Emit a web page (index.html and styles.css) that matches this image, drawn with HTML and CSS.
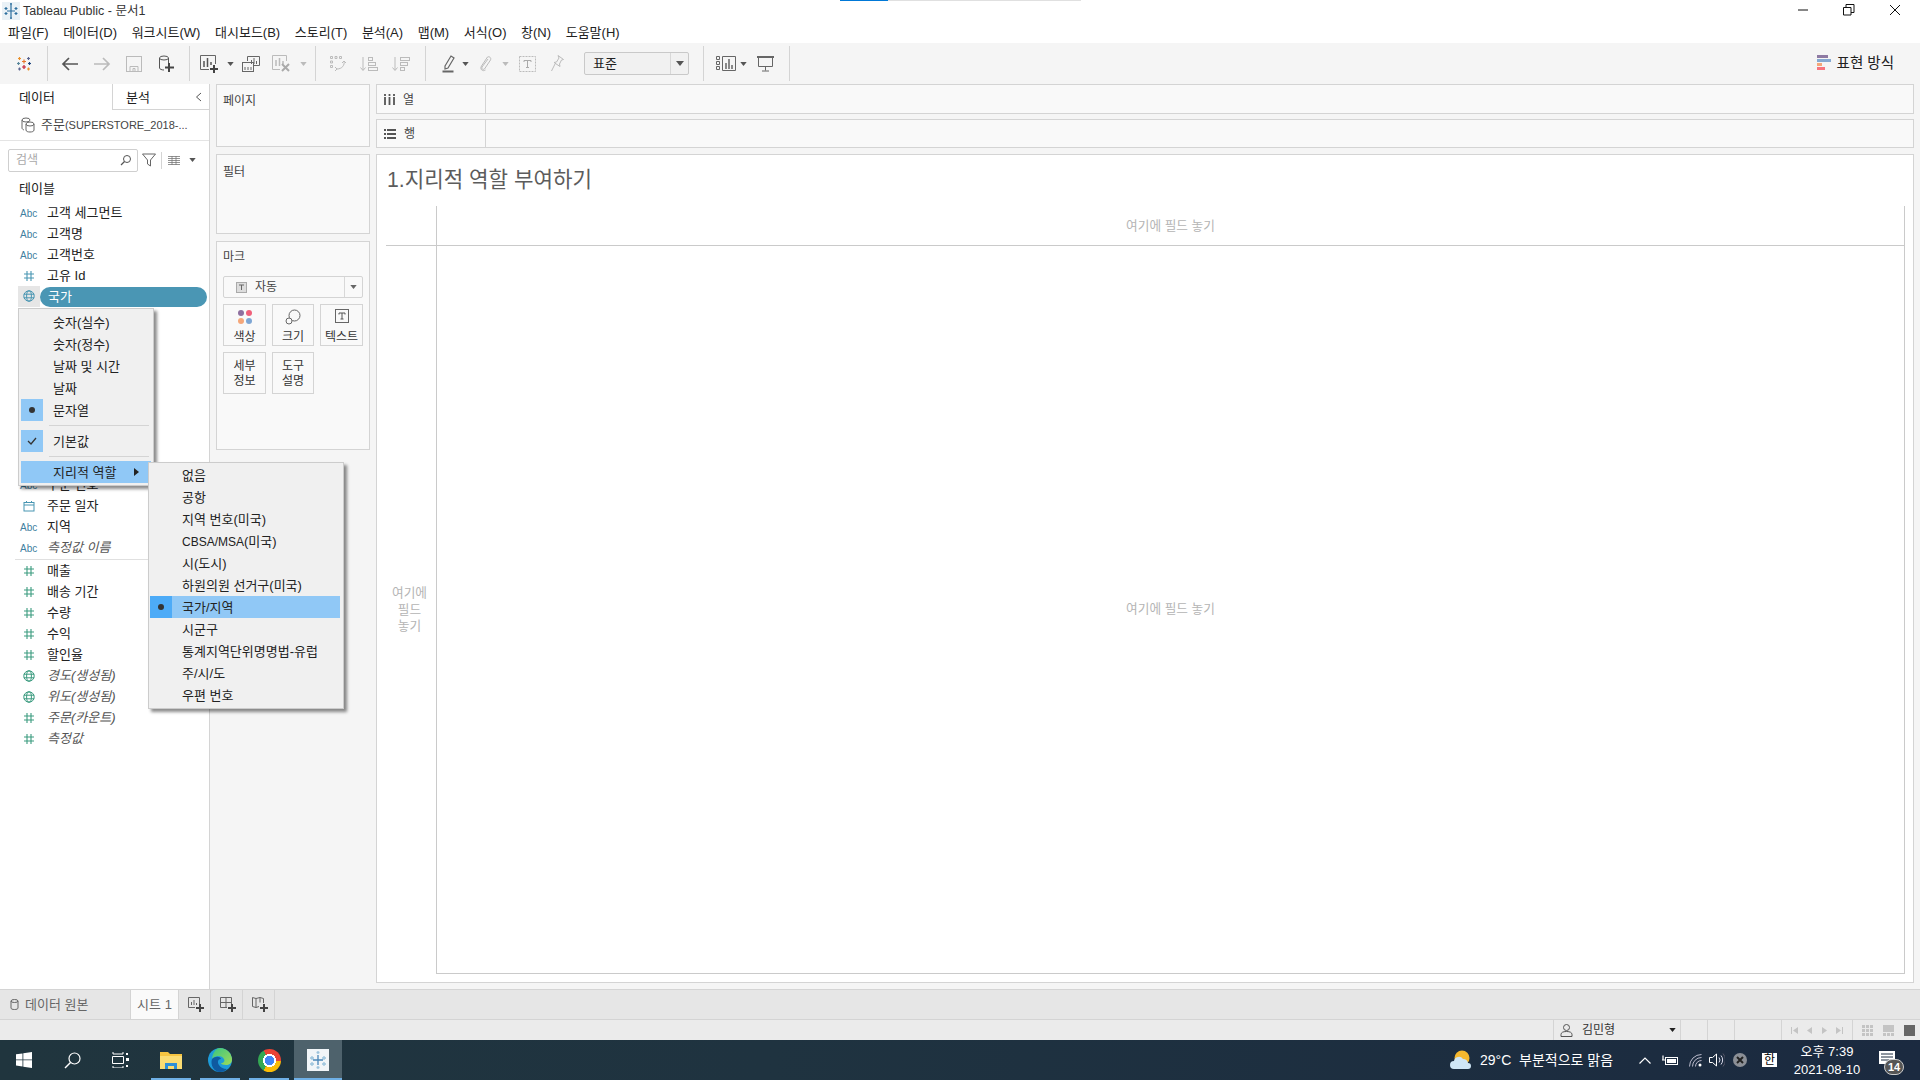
FILE: index.html
```html
<!DOCTYPE html>
<html lang="ko">
<head>
<meta charset="utf-8">
<title>Tableau Public - 문서1</title>
<link rel="stylesheet" href="styles.css">
</head>
<body>
<svg class="defs" width="0" height="0" aria-hidden="true">
  <symbol id="hash" viewBox="0 0 12 12"><path d="M4 1v10M8 1v10M1 4h10M1 8h10" fill="none" stroke="currentColor" stroke-width="1.1"/></symbol>
  <symbol id="globe" viewBox="0 0 12 12"><g fill="none" stroke="currentColor" stroke-width="1"><circle cx="6" cy="6" r="5.2"/><ellipse cx="6" cy="6" rx="2.4" ry="5.2"/><path d="M.8 4.2h10.4M.8 7.8h10.4"/></g></symbol>
  <symbol id="calendar" viewBox="0 0 12 12"><g fill="none" stroke="currentColor" stroke-width="1"><rect x="1" y="2.5" width="10" height="8.5"/><path d="M1 5h10M3.5 1v2M8.5 1v2"/></g></symbol>
  <symbol id="caret" viewBox="0 0 8 5"><path d="M0 0h8L4 5z" fill="currentColor"/></symbol>
  <symbol id="tlogo" viewBox="0 0 18 18"><g fill="none" stroke-width="1.2"><path d="M9 4.500v4M7 6.500h4" stroke="#e8762c"/><path d="M9 10v4M7 12h4" stroke="#c72035"/><path d="M3.500 7v3M2 8.500h3" stroke="#59879b"/><path d="M14.500 7v3M13 8.500h3" stroke="#1f457e"/><path d="M4.500 2v3M3 3.500h3" stroke="#eb912b"/><path d="M13.500 2v3M12 3.500h3" stroke="#5b6591"/><path d="M4.500 12.500v3M3 14h3" stroke="#5c6692"/><path d="M13.500 12.500v3M12 14h3" stroke="#eb912b"/></g></symbol>
</svg>

<div class="progress"><span class="progress-on"></span></div>

<header class="titlebar">
  <svg class="title-logo" width="18" height="18" viewBox="0 0 18 18"><rect width="18" height="18" fill="#e9f1f6"/><g fill="none" stroke="#2c6f9e" stroke-width="1.2"><path d="M9 3v12M5 9h8M4 5v3M2.500 6.500h3M14 5v3M12.500 6.500h3M4 10v3M2.500 11.500h3M14 10v3M12.500 11.500h3M9 1v2M8 2h2M9 15v2M8 16h2"/></g></svg>
  <span class="title-text">Tableau Public - 문서1</span>
  <div class="win-controls">
    <svg width="12" height="12" viewBox="0 0 12 12"><path d="M1 6h10" stroke="#111"/></svg>
    <svg width="12" height="12" viewBox="0 0 12 12"><path d="M.5 3.500h7.500v7.500h-7.500zM3 3.500v-3h8v8h-3" fill="none" stroke="#111"/></svg>
    <svg width="12" height="12" viewBox="0 0 12 12"><path d="M1 1l10 10M11 1L1 11" stroke="#111"/></svg>
  </div>
</header>

<nav class="menubar">
  <span>파일(F)</span><span>데이터(D)</span><span>워크시트(W)</span><span>대시보드(B)</span><span>스토리(T)</span><span>분석(A)</span><span>맵(M)</span><span>서식(O)</span><span>창(N)</span><span>도움말(H)</span>
</nav>

<div class="toolbar">
  <div class="t w47"><svg width="18" height="18"><use href="#tlogo"/></svg></div>
  <i class="sep"></i><i class="sp6"></i>
  <div class="t w32"><svg width="18" height="14" viewBox="0 0 18 14"><path d="M17 7H2M8 1L2 7l6 6" fill="none" stroke="#555" stroke-width="1.700"/></svg></div>
  <div class="t w32"><svg width="18" height="14" viewBox="0 0 18 14"><path d="M1 7h15M10 1l6 6-6 6" fill="none" stroke="#bbb" stroke-width="1.700"/></svg></div>
  <div class="t w32"><svg width="16" height="16" viewBox="0 0 16 16"><g fill="none" stroke="#bbb"><rect x=".5" y=".5" width="15" height="15"/><path d="M4 15.500v-5h8v5M7 15.500v-3h2v3"/></g></svg></div>
  <div class="t w32"><svg width="16" height="18" viewBox="0 0 16 18"><g fill="none" stroke="#555"><ellipse cx="6" cy="3" rx="4.500" ry="2"/><path d="M1.500 3v10c0 1 2 2 4.500 2M10.500 3v5"/></g><path d="M11 8v9M7 12.500h9" stroke="#444" stroke-width="2"/></svg></div>
  <i class="sp7"></i><i class="sep"></i><i class="sp6"></i>
  <div class="t w26"><svg width="18" height="18" viewBox="0 0 18 18"><g fill="none" stroke="#666"><path d="M15.500 9V.5H.5v14H9"/></g><path d="M4 6v6M7.500 3v9M11 7v3" stroke="#555" stroke-width="1.500"/><path d="M14 10v8M10 14h8" stroke="#444" stroke-width="2"/></svg></div>
  <div class="t w16 dark"><svg width="7" height="4"><use href="#caret"/></svg></div>
  <div class="t w26"><svg width="18" height="16" viewBox="0 0 18 16"><g fill="none" stroke="#666"><path d="M5.500 5V.5h12v9H12"/><rect x=".5" y="6.500" width="11" height="9" fill="#f5f5f5"/></g><path d="M9.500 4v4M12 2v6M14.500 5v3M3 11v3M6 11v3M9 11v3" stroke="#666"/></svg></div>
  <div class="t w34"><svg width="18" height="17" viewBox="0 0 18 17"><path d="M14.500 6V.5H.5v14H8" fill="none" stroke="#bbb"/><path d="M4 5v6M7.500 3v8M11 6v3" stroke="#bbb" stroke-width="1.500"/><path d="M10 9l7 7M17 9l-7 7" stroke="#aaa" stroke-width="2"/></svg></div>
  <div class="t w10 light"><svg width="7" height="4"><use href="#caret"/></svg></div>
  <i class="sp7"></i><i class="sep"></i><i class="sp6"></i>
  <div class="t w30"><svg width="17" height="17" viewBox="0 0 17 17"><g fill="none" stroke="#bbb"><path d="M1.500 1.500h2v2h-2zM6 1.500h2v2H6zM10.500 1.500h2v2h-2zM1.500 6h2v2h-2zM1.500 10.500h2v2h-2z"/><path d="M15 6c1 4-2 8-7 8M6 12l2 2-2 2M13 8l2-2 2 2"/></g></svg></div>
  <div class="t w34"><svg width="18" height="16" viewBox="0 0 18 16"><g fill="none" stroke="#bbb"><path d="M3 1v13M.5 11.500L3 14.500l2.500-3"/><rect x="8.500" y="1.500" width="4" height="3"/><rect x="8.500" y="6.500" width="7" height="3"/><rect x="8.500" y="11.500" width="9" height="3"/></g></svg></div>
  <div class="t w30"><svg width="18" height="16" viewBox="0 0 18 16"><g fill="none" stroke="#bbb"><path d="M3 1v13M.5 11.500L3 14.500l2.500-3"/><rect x="8.500" y="1.500" width="9" height="3"/><rect x="8.500" y="6.500" width="7" height="3"/><rect x="8.500" y="11.500" width="4" height="3"/></g></svg></div>
  <i class="sp9"></i><i class="sep"></i><i class="sp9"></i>
  <div class="t w26"><svg width="13" height="18" viewBox="0 0 13 18"><path d="M3 11l6-10 3 2-6 10-3 1z" fill="none" stroke="#666" stroke-width="1.200"/><path d="M.5 16.500h11" stroke="#666" stroke-width="2"/></svg></div>
  <div class="t w8 dark"><svg width="7" height="4"><use href="#caret"/></svg></div>
  <div class="t w32"><svg width="13" height="17" viewBox="0 0 13 17"><path d="M9 4l-6 8c-1 2 1 3 2.500 2l6-9c1-2-1-4-3-3l-6 9c-2 3 1 6 4 4" fill="none" stroke="#bbb"/></svg></div>
  <div class="t w8 light"><svg width="7" height="4"><use href="#caret"/></svg></div>
  <div class="t w36"><svg width="17" height="16" viewBox="0 0 17 16"><rect x=".5" y=".5" width="16" height="15" fill="none" stroke="#bbb" stroke-dasharray="2 1"/><path d="M5 4.500h7M8.500 4.500v7M7 11.500h3M5 4.500v1.500M12 4.500v1.500" fill="none" stroke="#aaa"/></svg></div>
  <div class="t w24"><svg width="13" height="17" viewBox="0 0 13 17"><path d="M7 .5l5.500 4-2 .5-2 4 .5 2.500-6-4 2.500-.5 2.500-4zM4 9l-3.500 7" fill="none" stroke="#bbb"/></svg></div>
  <i class="sp15"></i>
  <div class="toolbar-select"><span class="toolbar-select-text">표준</span><span class="toolbar-select-btn"><svg width="8" height="5"><use href="#caret"/></svg></span></div>
  <i class="sp14"></i><i class="sep"></i><i class="sp9"></i>
  <div class="t w26"><svg width="20" height="15" viewBox="0 0 20 15"><g fill="none" stroke="#666"><path d="M.5.500h3v3h-3zM.5 5.500h3v3h-3zM.5 10.500h3v3h-3zM6.500.500h13v14h-13z"/></g><path d="M10 7v6M13 3v10M16 9v4" stroke="#666" stroke-width="1.500"/></svg></div>
  <div class="t w8 dark"><svg width="7" height="4"><use href="#caret"/></svg></div>
  <div class="t w36"><svg width="17" height="16" viewBox="0 0 17 16"><path d="M0 1h17" stroke="#666" stroke-width="2"/><path d="M1.500 1v9.500h14V1M8.500 10.500v4M5 15h7" fill="none" stroke="#666"/></svg></div>
  <i class="sp6"></i><i class="sep"></i>
  <div class="show-me">
    <svg width="14" height="16" viewBox="0 0 14 16"><rect width="11" height="3" fill="#8e7aa3"/><rect y="4" width="14" height="3" fill="#86a9d1"/><rect y="8" width="5" height="3" fill="#f5a77a"/><rect y="12" width="8" height="3" fill="#f7757f"/></svg>
    <span>표현 방식</span>
  </div>
</div>

<main class="workspace">
  <aside class="data-pane">
    <div class="pane-tabs">
      <div class="pane-tab pane-tab-on">데이터</div>
      <div class="pane-tab pane-tab-off">분석
        <svg class="collapse" width="7" height="10" viewBox="0 0 7 10"><path d="M6 1L1.500 5 6 9" fill="none" stroke="#555"/></svg>
      </div>
    </div>
    <div class="source">
      <svg width="14" height="16" viewBox="0 0 14 16"><g fill="none" stroke="#666"><ellipse cx="5" cy="3" rx="4" ry="2"/><path d="M1 3v8c0 1 1 1.500 2 2"/><ellipse cx="9" cy="7" rx="4" ry="2" fill="#fff"/><path d="M5 7v6c0 1.500 2 2 4 2s4-.5 4-2V7"/></g></svg>
      <span>주문<span class="src-latin">(SUPERSTORE_2018-...</span></span>
    </div>
    <div class="search-row">
      <div class="search-box"><span>검색</span><svg width="12" height="12" viewBox="0 0 12 12"><circle cx="7" cy="5" r="3.500" fill="none" stroke="#555"/><path d="M4.500 7.500L1 11" stroke="#555" stroke-width="1.300"/></svg></div>
      <svg class="funnel" width="14" height="14" viewBox="0 0 14 14"><path d="M.5 1h13L8.500 7v6l-3-2V7z" fill="none" stroke="#666"/></svg>
      <i class="search-sep"></i>
      <svg class="list-icon" width="12" height="9" viewBox="0 0 12 9"><path d="M0 .5h12M0 2.500h12M0 4.500h12M0 6.500h12M0 8.500h12M4 0v9M8 0v9" stroke="#777" stroke-width=".8"/></svg>
      <svg class="list-caret" width="7" height="4"><use href="#caret"/></svg>
    </div>
    <div class="tables-head">테이블</div>
    <ul class="fields">
      <li class="field"><b class="abc">Abc</b><span>고객 세그먼트</span></li>
      <li class="field"><b class="abc">Abc</b><span>고객명</span></li>
      <li class="field"><b class="abc">Abc</b><span>고객번호</span></li>
      <li class="field"><svg class="fi dim" width="12" height="12"><use href="#hash"/></svg><span>고유 Id</span></li>
      <li class="field field-sel"><span class="fi-cell"><svg class="fi dim" width="12" height="12"><use href="#globe"/></svg></span><span class="pill">국가</span></li>
      <li class="fields-covered"></li>
      <li class="field"><b class="abc">Abc</b><span>주문 번호</span></li>
      <li class="field"><svg class="fi dim" width="12" height="12"><use href="#calendar"/></svg><span>주문 일자</span></li>
      <li class="field"><b class="abc">Abc</b><span>지역</span></li>
      <li class="field field-gen"><b class="abc">Abc</b><span>측정값 이름</span></li>
      <li class="fields-sep"></li>
      <li class="field"><svg class="fi mea" width="12" height="12"><use href="#hash"/></svg><span>매출</span></li>
      <li class="field"><svg class="fi mea" width="12" height="12"><use href="#hash"/></svg><span>배송 기간</span></li>
      <li class="field"><svg class="fi mea" width="12" height="12"><use href="#hash"/></svg><span>수량</span></li>
      <li class="field"><svg class="fi mea" width="12" height="12"><use href="#hash"/></svg><span>수익</span></li>
      <li class="field"><svg class="fi mea" width="12" height="12"><use href="#hash"/></svg><span>할인율</span></li>
      <li class="field field-gen"><svg class="fi mea" width="12" height="12"><use href="#globe"/></svg><span>경도(생성됨)</span></li>
      <li class="field field-gen"><svg class="fi mea" width="12" height="12"><use href="#globe"/></svg><span>위도(생성됨)</span></li>
      <li class="field field-gen"><svg class="fi mea" width="12" height="12"><use href="#hash"/></svg><span>주문(카운트)</span></li>
      <li class="field field-gen"><svg class="fi mea" width="12" height="12"><use href="#hash"/></svg><span>측정값</span></li>
    </ul>
  </aside>

  <section class="cards">
    <div class="card card-pages"><div class="card-title">페이지</div></div>
    <div class="card card-filters"><div class="card-title">필터</div></div>
    <div class="card card-marks">
      <div class="card-title">마크</div>
      <div class="mark-select">
        <svg class="mark-select-icon" width="11" height="11" viewBox="0 0 11 11"><rect x=".5" y=".5" width="10" height="10" fill="#ddd" stroke="#aaa"/><path d="M3 3h5M5.500 3v5" stroke="#666"/></svg>
        <span class="mark-select-text">자동</span>
        <span class="mark-select-btn"><svg width="7" height="4"><use href="#caret"/></svg></span>
      </div>
      <div class="mark-grid">
        <div class="mark-btn"><svg width="16" height="16" viewBox="0 0 16 16"><circle cx="4" cy="4" r="3" fill="#8e6f9f"/><circle cx="12" cy="4" r="3" fill="#f0607a"/><circle cx="4" cy="12" r="3" fill="#f5a77a"/><circle cx="12" cy="12" r="3" fill="#7ea6d4"/></svg><span>색상</span></div>
        <div class="mark-btn"><svg width="16" height="16" viewBox="0 0 16 16"><circle cx="9.500" cy="6.500" r="5.500" fill="none" stroke="#666"/><circle cx="4" cy="12" r="3" fill="#fafafa" stroke="#666"/></svg><span>크기</span></div>
        <div class="mark-btn"><svg width="14" height="14" viewBox="0 0 14 14"><rect x=".5" y=".5" width="13" height="13" fill="none" stroke="#666"/><path d="M4 4h6M7 4v6M5.500 10h3M4 4v1.500M10 4v1.500" fill="none" stroke="#555"/></svg><span>텍스트</span></div>
        <div class="mark-btn mark-btn-2"><span>세부<br>정보</span></div>
        <div class="mark-btn mark-btn-2"><span>도구<br>설명</span></div>
      </div>
    </div>
  </section>

  <section class="stage">
    <div class="shelf"><div class="shelf-label"><svg width="11" height="11" viewBox="0 0 11 11"><path d="M1 3v8M5.500 3v8M10 3v8M1 0v2M5.500 0v2M10 0v2" stroke="#555" stroke-width="1.800"/></svg><span>열</span></div></div>
    <div class="shelf shelf-rows"><div class="shelf-label"><svg width="12" height="10" viewBox="0 0 12 10"><path d="M3 1h9M3 5h9M3 9h9M0 1h2M0 5h2M0 9h2" stroke="#555" stroke-width="1.800"/></svg><span>행</span></div></div>
    <div class="sheet">
      <h1 class="sheet-title">1.지리적 역할 부여하기</h1>
      <div class="viz">
        <div class="viz-corner"></div>
        <div class="viz-top">여기에 필드 놓기</div>
        <div class="viz-left">여기에<br>필드<br>놓기</div>
        <div class="viz-main">여기에 필드 놓기</div>
      </div>
    </div>
  </section>
</main>

<div class="tabbar">
  <div class="tab-source"><svg width="9" height="11" viewBox="0 0 9 11"><g fill="none" stroke="#666"><ellipse cx="4.500" cy="2" rx="3.500" ry="1.500"/><path d="M1 2v7c0 1 1.500 1.500 3.500 1.500S8 10 8 9V2"/></g></svg><span>데이터 원본</span></div>
  <div class="tab-sheet">시트 1</div>
  <div class="tab-add"><svg width="16" height="15" viewBox="0 0 16 15"><path d="M11.500 7V.5h-11v10H7" fill="none" stroke="#666"/><path d="M3.500 5v3M6 3v5M8.500 6v2" stroke="#666"/><path d="M12 7v8M8 11h8" stroke="#444" stroke-width="2"/></svg></div>
  <div class="tab-add"><svg width="16" height="15" viewBox="0 0 16 15"><path d="M11.500 7V.5h-11v10H7M.5 5.500h11M6 .5v10" fill="none" stroke="#666"/><path d="M12 7v8M8 11h8" stroke="#444" stroke-width="2"/></svg></div>
  <div class="tab-add"><svg width="16" height="15" viewBox="0 0 16 15"><path d="M11.500 6V1.500L8 .5 4 1.500.5.500v9l3.500 1 3-1M4 1.500v9M8 .5v5" fill="none" stroke="#666"/><path d="M12 7v8M8 11h8" stroke="#444" stroke-width="2"/></svg></div>
</div>

<div class="statusbar">
  <div class="status-user">
    <svg width="13" height="13" viewBox="0 0 13 13"><circle cx="6.500" cy="3.500" r="3" fill="none" stroke="#555"/><path d="M1 12.500v-2c0-2 2-3 5.500-3s5.500 1 5.500 3v2z" fill="none" stroke="#555"/></svg>
    <span class="status-name">김민형</span>
    <svg class="status-caret" width="7" height="4"><use href="#caret"/></svg>
  </div>
  <div class="status-cell w27"></div>
  <div class="status-cell w27"></div>
  <div class="status-cell w47b"></div>
  <div class="status-nav">
    <svg width="7" height="7" viewBox="0 0 7 7"><path d="M0 0h1v7H0zM7 0v7L2 3.500z" fill="#c4c4c4"/></svg>
    <svg width="5" height="7" viewBox="0 0 5 7"><path d="M5 0v7L0 3.500z" fill="#c4c4c4"/></svg>
    <svg width="5" height="7" viewBox="0 0 5 7"><path d="M0 0v7l5-3.500z" fill="#c4c4c4"/></svg>
    <svg width="7" height="7" viewBox="0 0 7 7"><path d="M6 0h1v7H6zM0 0v7l5-3.500z" fill="#c4c4c4"/></svg>
  </div>
  <div class="status-views">
    <svg width="11" height="11" viewBox="0 0 11 11"><path fill="#c4c4c4" d="M0 0h3v3H0zM4 0h3v3H4zM8 0h3v3H8zM0 4h3v3H0zM4 4h3v3H4zM8 4h3v3H8zM0 8h3v3H0zM4 8h3v3H4zM8 8h3v3H8z"/></svg>
    <svg width="11" height="11" viewBox="0 0 11 11"><path fill="#c4c4c4" d="M0 0h11v7H0zM0 8h3v3H0zM4 8h3v3H4zM8 8h3v3H8z"/></svg>
    <svg width="11" height="11" viewBox="0 0 11 11"><rect width="11" height="11" fill="#666"/></svg>
  </div>
</div>

<footer class="taskbar">
  <div class="task t48"><svg width="16" height="16" viewBox="0 0 16 16"><path fill="#fff" d="M0 2.300L6.500 1.400V7.500H0zM7.300 1.300L16 0V7.500H7.300zM0 8.300H6.500V14.500L0 13.600zM7.300 8.300H16V16L7.300 14.700z"/></svg></div>
  <div class="task t48"><svg width="17" height="17" viewBox="0 0 17 17"><circle cx="10.500" cy="6.500" r="5.500" fill="none" stroke="#fff" stroke-width="1.200"/><path d="M6.500 10.500L1 16" stroke="#fff" stroke-width="1.500"/></svg></div>
  <div class="task t48"><svg width="17" height="16" viewBox="0 0 17 16"><path d="M1 0v2h10V0M1 14v2h10v-2M.5 4.500h11v7H.5z" fill="none" stroke="#fff"/><path d="M14 1h2v2h-2zM14 6h3v3h-3zM14 13h2v2h-2z" fill="#fff"/></svg></div>
  <i class="task-sp3"></i>
  <div class="task t40 task-open"><svg width="22" height="18" viewBox="0 0 22 18"><path d="M0 1h8l2 2h12v15H0z" fill="#f6c441"/><path d="M0 5h22v13H0z" fill="#fbdc73"/><path d="M5 12h12v6h-3v-3H8v3H5z" fill="#2e8fd8"/></svg></div>
  <i class="task-sp9"></i>
  <div class="task t40 task-open"><svg width="24" height="24" viewBox="0 0 24 24"><defs><linearGradient id="edgeg" x1="0" y1="0" x2="1" y2="1"><stop offset="0" stop-color="#39c481"/><stop offset="1" stop-color="#9ddb5a"/></linearGradient></defs><circle cx="12" cy="12" r="12" fill="#1d9bd9"/><path d="M12 0a12 12 0 0 1 12 12c0 3-3 5-6 5-3 0-5-1-5-2 3 0 4-2 3-4-2-4-9-4-12 0C5 4 8 0 12 0z" fill="url(#edgeg)"/><path d="M4 11c3-3 8-3 9 0-3 0-4 3-2 6 1 2 4 4 8 4-2 2-4 3-7 3C6 24 2 17 4 11z" fill="#0f5aa0"/></svg></div>
  <i class="task-sp9"></i>
  <div class="task t40 task-open"><span class="chrome"></span></div>
  <i class="task-sp5"></i>
  <div class="task t48 task-active"><svg width="22" height="22" viewBox="0 0 22 22"><rect width="22" height="22" fill="#f1f5f8"/><g fill="none" stroke-width="1.300"><path d="M11 6v10M6 11h10" stroke="#4a86b8"/><path d="M5 7v4M3 9h4M17 7v4M15 9h4M5 13v4M3 15h4M17 13v4M15 15h4M11 2v3M9.500 3.500h3M11 17v3M9.500 18.500h3" stroke="#9cc3dc"/></g></svg></div>
  <div class="tray">
    <svg class="tray-weather" width="22" height="20" viewBox="0 0 22 20"><circle cx="12" cy="8" r="7.500" fill="#f5b82e"/><path d="M4 19a4 4 0 0 1 0-8 5 5 0 0 1 9-2 5 5 0 0 1 5 4 3 3 0 0 1 0 6z" fill="#cfe6f5"/></svg>
    <span class="tray-weather-text">29°C&nbsp; 부분적으로 맑음</span>
    <svg class="tray-i chev" width="12" height="7" viewBox="0 0 12 7"><path d="M.5 6.500L6 1l5.500 5.500" fill="none" stroke="#fff" stroke-width="1.200"/></svg>
    <svg class="tray-i bat" width="16" height="11" viewBox="0 0 16 11"><rect x="3.500" y="2.500" width="12" height="7" fill="none" stroke="#fff"/><rect x="5" y="4" width="9" height="4" fill="#fff"/><path d="M0 5h3M1 .5v4" stroke="#fff" stroke-width="1.200"/></svg>
    <svg class="tray-i wifi" width="13" height="13" viewBox="0 0 13 13"><g fill="none" stroke="#bbc" stroke-width="1"><path d="M.5 12.500a12 12 0 0 1 12-12M3.500 12.500a9 9 0 0 1 9-9M6.500 12.500a6 6 0 0 1 6-6"/></g><circle cx="11" cy="11" r="1.500" fill="#fff"/></svg>
    <svg class="tray-i vol" width="16" height="14" viewBox="0 0 16 14"><path d="M.5 4.500h3L7.500 1v12l-4-3.500h-3z" fill="none" stroke="#fff"/><path d="M10 4.500a4 4 0 0 1 0 5M12 2.500a7 7 0 0 1 0 9" fill="none" stroke="#dde"/><path d="M14 .5a10 10 0 0 1 0 13" fill="none" stroke="#556"/></svg>
    <svg class="tray-i x" width="14" height="14" viewBox="0 0 14 14"><circle cx="7" cy="7" r="7" fill="#8b8f96"/><path d="M4 4l6 6M10 4l-6 6" stroke="#222" stroke-width="2"/></svg>
    <span class="tray-ime">한</span>
    <div class="tray-clock"><span>오후 7:39</span><span>2021-08-10</span></div>
    <div class="tray-note"><svg width="16" height="13" viewBox="0 0 16 13"><path d="M0 0h16v13H0z" fill="#fff"/><path d="M2 3h12M2 6h12M2 9h8" stroke="#1b2a3e"/></svg><b class="tray-badge">14</b></div>
  </div>
</footer>

<div class="ctx-menu">
  <div class="ctx-item"><span class="ctx-mark"></span>숫자(실수)</div>
  <div class="ctx-item"><span class="ctx-mark"></span>숫자(정수)</div>
  <div class="ctx-item"><span class="ctx-mark"></span>날짜 및 시간</div>
  <div class="ctx-item"><span class="ctx-mark"></span>날짜</div>
  <div class="ctx-item"><span class="ctx-mark ctx-mark-on"><i class="dot"></i></span>문자열</div>
  <div class="ctx-sep"></div>
  <div class="ctx-item"><span class="ctx-mark ctx-mark-on"><svg width="10" height="8" viewBox="0 0 10 8"><path d="M1 4l3 3 5-6" fill="none" stroke="#333" stroke-width="1.300"/></svg></span>기본값</div>
  <div class="ctx-sep"></div>
  <div class="ctx-item ctx-item-hi"><span class="ctx-mark"></span>지리적 역할<svg class="ctx-arrow" width="5" height="8" viewBox="0 0 5 8"><path d="M0 0l5 4-5 4z" fill="#222"/></svg></div>
</div>

<div class="ctx-menu ctx-sub">
  <div class="ctx-item"><span class="ctx-mark"></span>없음</div>
  <div class="ctx-item"><span class="ctx-mark"></span>공항</div>
  <div class="ctx-item"><span class="ctx-mark"></span>지역 번호(미국)</div>
  <div class="ctx-item"><span class="ctx-mark"></span><span><span class="ctx-latin">CBSA/MSA</span>(미국)</span></div>
  <div class="ctx-item"><span class="ctx-mark"></span>시(도시)</div>
  <div class="ctx-item"><span class="ctx-mark"></span>하원의원 선거구(미국)</div>
  <div class="ctx-item ctx-item-hi"><span class="ctx-mark ctx-mark-strong"><i class="dot"></i></span>국가/지역</div>
  <div class="ctx-item"><span class="ctx-mark"></span>시군구</div>
  <div class="ctx-item"><span class="ctx-mark"></span>통계지역단위명명법-유럽</div>
  <div class="ctx-item"><span class="ctx-mark"></span>주/시/도</div>
  <div class="ctx-item"><span class="ctx-mark"></span>우편 번호</div>
</div>
</body>
</html>
```

FILE: styles.css
```css
* { box-sizing: border-box; }
html, body { margin: 0; padding: 0; }
body {
  width: 1920px;
  height: 1080px;
  overflow: hidden;
  position: relative;
  display: flex;
  flex-direction: column;
  background: #fff;
  color: #222;
  font-family: "Liberation Sans", "Noto Sans CJK KR", sans-serif;
  font-size: 13px;
  line-height: 1.2;
}
ul { list-style: none; margin: 0; padding: 0; }
i { font-style: normal; }
.defs { position: absolute; }

.progress { position: absolute; left: 840px; top: 0; width: 241px; height: 1px; background: #e0e0e0; }
.progress-on { display: block; width: 48px; height: 1px; background: #0078d7; }

.titlebar { height: 22px; flex: none; display: flex; align-items: center; padding-left: 1px; }
.title-logo { margin-left: 1px; }
.title-text { margin-left: 3px; padding-top: 1px; color: #333; font-size: 12.500px; }
.win-controls { margin-left: auto; display: flex; gap: 34px; padding-right: 19px; margin-top: -2px; }

.menubar { height: 21px; flex: none; display: flex; align-items: center; gap: 14.600px; padding: 1px 0 0 8px; color: #222; }

.toolbar { height: 41px; flex: none; display: flex; align-items: center; background: #f5f5f5; }
.t { height: 40px; display: flex; align-items: center; justify-content: center; flex: none; }
.w8 { width: 8px; } .w10 { width: 10px; } .w16 { width: 16px; } .w24 { width: 24px; } .w26 { width: 26px; }
.w30 { width: 30px; } .w32 { width: 32px; } .w34 { width: 34px; } .w36 { width: 36px; } .w47 { width: 47px; }
.dark { color: #555; } .light { color: #bbb; }
.sep { width: 1px; height: 35px; background: #d4d4d4; flex: none; }
.sp6 { width: 6px; flex: none; } .sp7 { width: 7px; flex: none; } .sp9 { width: 9px; flex: none; }
.sp14 { width: 14px; flex: none; } .sp15 { width: 15px; flex: none; }
.toolbar-select { width: 105px; height: 23px; display: flex; flex: none; border: 1px solid #c9c9c9; border-radius: 2px; background: #f1f1f1; }
.toolbar-select-text { flex: 1; padding-left: 8px; line-height: 21px; }
.toolbar-select-btn { width: 18px; border-left: 1px solid #d8d8d8; display: flex; align-items: center; justify-content: center; color: #555; }
.show-me { margin-left: auto; padding-right: 26px; display: flex; align-items: center; gap: 6px; font-size: 14.500px; }

.workspace { height: 905px; flex: none; display: flex; background: #f5f5f5; }

.data-pane { width: 210px; flex: none; background: #fff; border-right: 1px solid #d4d4d4; }
.pane-tabs { height: 26px; display: flex; }
.pane-tab { line-height: 27px; padding-left: 19px; }
.pane-tab-on { width: 112px; }
.pane-tab-off { width: 97px; padding: 1px 7px 0 13px; border-left: 1px solid #d4d4d4; border-bottom: 1px solid #d4d4d4; display: flex; align-items: center; justify-content: space-between; }
.source { height: 31px; padding-left: 21px; display: flex; align-items: center; gap: 6px; border-bottom: 1px solid #e4e4e4; color: #444; }
.src-latin { font-size: 11px; }
.search-row { height: 40px; display: flex; align-items: center; padding-left: 8px; padding-bottom: 2px; }
.search-box { width: 130px; height: 23px; border: 1px solid #cfcfcf; border-radius: 2px; display: flex; align-items: center; justify-content: space-between; padding: 0 5px 0 7px; color: #aaa; font-size: 12px; }
.funnel { margin-left: 4px; }
.search-sep { width: 1px; height: 17px; background: #d4d4d4; margin-left: 5px; }
.list-icon { margin-left: 6px; }
.list-caret { margin-left: 9px; color: #555; }
.tables-head { height: 21px; line-height: 16px; padding-left: 19px; }

.field { height: 21px; display: flex; align-items: center; position: relative; padding-left: 47px; }
.abc { position: absolute; left: 20px; width: 17px; font: 400 10px "Liberation Sans", sans-serif; color: #3f7f9f; text-align: center; padding-top: 1px; }
.fi { position: absolute; left: 23px; }
.dim { color: #4996b2; }
.mea { color: #3b9b7f; }
.field-gen { color: #555; font-style: italic; }
.field-sel { padding-left: 40px; }
.fi-cell { position: absolute; left: 18px; top: 0; width: 22px; height: 21px; background: #e6e6e6; }
.fi-cell .fi { left: 5px; top: 4px; }
.pill { width: 167px; height: 20px; border-radius: 10px; background: #4a96b4; color: #fff; padding-left: 8px; line-height: 20px; }
.fields-covered { height: 167.500px; }
.fields-sep { height: 1px; margin: 0 0 1px 15px; background: #e0e0e0; width: 194px; }

.cards { width: 166px; flex: none; padding-left: 6px; display: flex; flex-direction: column; gap: 7px; }
.card { width: 154px; background: #f9f9f9; border: 1px solid #d4d4d4; padding: 0 6px; }
.card-pages { height: 63px; padding-top: 1px; }
.card-filters { height: 80px; padding-top: 2px; }
.card-marks { height: 209px; }
.card-title { font-size: 12px; line-height: 20px; padding-top: 5px; color: #444; }
.mark-select { height: 22px; margin-top: 9px; width: 140px; border: 1px solid #d4d4d4; border-radius: 2px; background: #f9f9f9; display: flex; align-items: center; font-size: 12px; }
.mark-select-icon { margin-left: 12px; }
.mark-select-text { margin-left: 8px; flex: 1; color: #444; }
.mark-select-btn { width: 18px; height: 20px; border-left: 1px solid #d8d8d8; display: flex; align-items: center; justify-content: center; color: #666; }
.mark-grid { display: grid; grid-template-columns: 43px 42px 43px; gap: 6px; margin-top: 6px; }
.mark-btn { height: 42px; border: 1px solid #d4d4d4; display: flex; flex-direction: column; align-items: center; justify-content: space-between; padding: 4px 0 0; font-size: 12px; line-height: 15px; color: #333; }
.mark-btn-2 { justify-content: center; text-align: center; padding: 2px 0 0; }

.stage { flex: 1; display: flex; flex-direction: column; padding-right: 6px; min-width: 0; }
.shelf { height: 30px; flex: none; background: #f9f9f9; border: 1px solid #d4d4d4; }
.shelf-rows { margin-top: 5px; height: 29px; }
.shelf-label { width: 109px; height: 100%; border-right: 1px solid #d4d4d4; display: flex; align-items: center; gap: 8px; padding-left: 7px; font-size: 12px; color: #444; }
.shelf-label span { padding-top: 2px; }
.sheet { height: 829px; margin-top: 6px; flex: none; background: #fff; border: 1px solid #d4d4d4; display: flex; flex-direction: column; padding: 0 8px 8px 9px; }
.sheet-title { margin: 0; height: 51px; flex: none; padding: 10px 0 0 1px; font-size: 21.200px; font-weight: 400; line-height: 30px; color: #5c5c5c; }
.viz { flex: 1; display: grid; grid-template-columns: 50px 1fr; grid-template-rows: 40px 1fr; color: #b4b4b4; font-size: 12.700px; }
.viz-corner { border-bottom: 1px solid #cacaca; }
.viz-top { display: flex; align-items: center; justify-content: center; border-left: 1px solid #cacaca; border-bottom: 1px solid #cacaca; border-right: 1px solid #cacaca; padding-top: 2px; }
.viz-left { display: flex; align-items: center; justify-content: center; text-align: center; line-height: 16.500px; padding-right: 3px; }
.viz-main { display: flex; align-items: center; justify-content: center; border: 1px solid #cacaca; border-top: 0; }

.tabbar { height: 31px; flex: none; display: flex; background: #e6e6e6; border-top: 1px solid #d4d4d4; border-bottom: 1px solid #d4d4d4; }
.tab-source { width: 130px; padding-left: 10px; display: flex; align-items: center; gap: 6px; color: #666; font-size: 13px; }
.tab-sheet { width: 49px; background: #fafafa; border-left: 1px solid #d4d4d4; border-right: 1px solid #d4d4d4; display: flex; align-items: center; justify-content: center; color: #666; font-size: 13px; }
.tab-add { width: 32px; border-right: 1px solid #d4d4d4; display: flex; align-items: center; justify-content: center; padding-left: 2px; }

.statusbar { height: 20px; flex: none; display: flex; justify-content: flex-end; background: #ebebeb; }
.status-cell, .status-user, .status-nav, .status-views { height: 20px; border-left: 1px solid #d4d4d4; display: flex; align-items: center; }
.status-user { width: 127px; padding-left: 6px; font-size: 12px; }
.status-name { margin-left: 9px; flex: 1; color: #333; }
.status-caret { margin-right: 4px; color: #222; }
.w27 { width: 27px; }
.w47b { width: 47px; }
.status-nav { width: 71px; justify-content: space-around; padding: 0 4px; }
.status-views { width: 68px; gap: 10px; padding-left: 9px; }

.taskbar { height: 40px; flex: none; display: flex; align-items: center; background: linear-gradient(90deg, #20353e 0%, #1f3340 40%, #1b2a40 100%); color: #fff; }
.task { height: 40px; flex: none; display: flex; align-items: center; justify-content: center; }
.t48 { width: 48px; } .t40 { width: 40px; }
.task-sp3 { width: 7px; flex: none; } .task-sp9 { width: 9px; flex: none; } .task-sp5 { width: 5px; flex: none; }
.task-open { box-shadow: inset 0 -2px 0 #6fb0e6; }
.task-active { background: #4e626c; box-shadow: inset 0 -2px 0 #6fb0e6; }
.chrome { width: 23px; height: 23px; border-radius: 50%; background: radial-gradient(circle, #4285f4 0 5px, #fff 5px 6.500px, transparent 6.500px), conic-gradient(from -30deg, #ea4335 0 120deg, #fbbc05 120deg 240deg, #34a853 240deg); }
.tray { margin-left: auto; height: 40px; display: flex; align-items: center; font-size: 13px; padding-right: 15px; }
.tray-weather-text { margin-left: 8px; width: 156px; font-size: 14px; white-space: nowrap; padding-top: 1px; }
.tray-i { flex: none; }
.chev { margin-left: 3px; }
.bat { margin-left: 11px; }
.wifi { margin-left: 11px; }
.vol { margin-left: 7px; }
.x { margin-left: 8px; }
.tray-ime { margin-left: 15px; width: 15px; height: 14px; background: #fff; color: #000; font-size: 12px; line-height: 14px; text-align: center; }
.tray-clock { margin-left: 5px; width: 90px; display: flex; flex-direction: column; align-items: center; gap: 3px; line-height: 15px; font-size: 13px; }
.tray-note { margin-left: 7px; position: relative; width: 26px; height: 30px; display: flex; align-items: flex-start; padding-top: 6px; }
.tray-badge { position: absolute; left: 5px; top: 14px; width: 20px; height: 16px; border-radius: 8px; background: #555; border: 1px solid #ccc; font-size: 11px; line-height: 14px; text-align: center; color: #fff; }

.ctx-menu { position: absolute; left: 18px; top: 308px; width: 136px; background: #f0f0f0; border: 1px solid #ccc; padding: 2px; box-shadow: 3px 3px 3px rgba(0, 0, 0, .45); }
.ctx-sub { left: 148px; top: 462px; width: 196px; padding: 1px 3px 2px 1px; }
.ctx-sub .ctx-item { width: 190px; }
.ctx-item { height: 22px; padding-top: 1px; display: flex; align-items: center; position: relative; color: #222; }
.ctx-mark { width: 22px; height: 22px; margin: -1px 10px 0 0; flex: none; display: flex; align-items: center; justify-content: center; }
.ctx-mark-on { background: #90c8f6; }
.ctx-mark-strong { background: #4dabf7; }
.ctx-item-hi { background: #90c8f6; }
.ctx-latin { font-size: 12px; }
.dot { width: 6px; height: 6px; border-radius: 50%; background: #333; }
.ctx-sep { height: 1px; margin: 4px 2px 4px 28px; background: #d4d4d4; }
.ctx-arrow { position: absolute; right: 12px; top: 7px; }
```
